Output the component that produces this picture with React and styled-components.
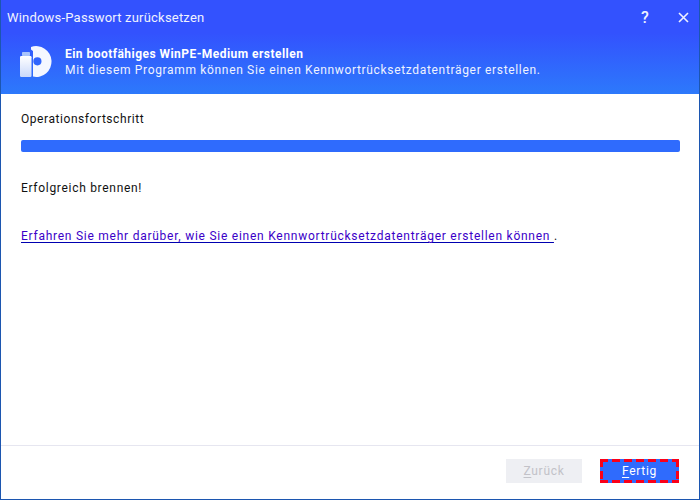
import React from "react";
import styled, { createGlobalStyle } from "styled-components";

const Global = createGlobalStyle`
  html, body { margin: 0; padding: 0; background: #fff; }
  #root { width: 700px; height: 500px; }
`;

const Frame = styled.div`
  width: 700px;
  height: 500px;
  box-sizing: border-box;
  display: flex;
  flex-direction: column;
  background: #fff;
  border: 1px solid #1c56b0;
  border-top: 0;
  font-family: Roboto, "Noto Sans", sans-serif;
  font-size: 12px;
  color: #111;
  overflow: hidden;
`;

const Header = styled.header`
  height: 94px;
  flex: none;
  background: linear-gradient(180deg, #3352fe 0%, #3352fe 35%, #2d79fb 100%);
  color: #fff;
  display: flex;
  flex-direction: column;
`;

const TitleBar = styled.div`
  height: 35px;
  display: flex;
  align-items: center;
  padding: 0 9px 2px 6px;
`;

const Title = styled.div`
  flex: 1;
  font-size: 13px;
  letter-spacing: 0.2px;
  color: #f0f2ff;
`;

const WinButton = styled.button`
  all: unset;
  width: 14px;
  height: 16px;
  display: flex;
  align-items: center;
  justify-content: center;
  margin-left: ${(p) => p.$gap || 0}px;
`;

const HelpMark = styled.span`
  font-size: 16px;
  font-weight: 500;
  color: #eef1ff;
  line-height: 1;
`;

const Banner = styled.div`
  display: flex;
  align-items: center;
  gap: 13px;
  padding: 9px 0 0 19px;
`;

const BannerText = styled.div`
  display: flex;
  flex-direction: column;
  gap: 1px;
  line-height: 15px;
`;

const BannerTitle = styled.div`
  font-weight: 700;
  font-size: 12px;
  letter-spacing: 0.46px;
`;

const BannerSub = styled.div`
  font-size: 12px;
  letter-spacing: 0.67px;
  color: #eef2ff;
`;

const Content = styled.main`
  flex: 1;
  display: flex;
  flex-direction: column;
  padding: 18px 19px 0 20px;
`;

const Label = styled.div`
  line-height: 15px;
  letter-spacing: 0.56px;
`;

const Track = styled.div`
  height: 12px;
  margin-top: 13px;
  border-radius: 2px;
  background: #2f6bfd;
  overflow: hidden;
`;

const Status = styled(Label)`
  margin-top: 29px;
  letter-spacing: 0.7px;
`;

const Info = styled.div`
  margin-top: 33px;
  line-height: 15px;
  letter-spacing: 0.75px;
`;

const Link = styled.a`
  color: #3b00c8;
  text-decoration: underline;
  text-decoration-color: #0000b0;
  text-underline-offset: 2px;
`;

const Footer = styled.footer`
  height: 54px;
  flex: none;
  box-sizing: border-box;
  border-top: 1px solid #e6e6f0;
  display: flex;
  justify-content: flex-end;
  align-items: flex-start;
  gap: 18px;
  padding: 13px 20px 0 0;
`;

const dash = "#fa0018";

const Button = styled.button`
  all: unset;
  width: ${(p) => (p.$primary ? 79 : 76)}px;
  height: 24px;
  box-sizing: border-box;
  display: flex;
  align-items: center;
  justify-content: center;
  font-size: 12px;
  letter-spacing: 0.7px;
  background-color: ${(p) => (p.$primary ? "#2f6bfd" : "#eeeff3")};
  color: ${(p) => (p.$primary ? "#fff" : "#c2c2c8")};
  background-repeat: no-repeat;
  background-image: ${(p) =>
    p.$primary
      ? `repeating-linear-gradient(90deg, ${dash} 0 8px, transparent 8px 12px),
         repeating-linear-gradient(90deg, ${dash} 0 8px, transparent 8px 12px),
         repeating-linear-gradient(180deg, ${dash} 0 8px, transparent 8px 12px),
         repeating-linear-gradient(180deg, ${dash} 0 8px, transparent 8px 12px)`
      : "none"};
  background-size: 100% 3px, 100% 3px, 3px 100%, 3px 100%;
  background-position: 0 0, 0 100%, 0 0, 100% 0;
  u { text-underline-offset: 2px; }
`;

const DiscIcon = () => (
  <svg width="32" height="32" viewBox="0 0 32 32">
    <defs>
      <linearGradient id="g" x1="0" y1="0" x2="0" y2="1">
        <stop offset="0" stopColor="#ffffff" />
        <stop offset="1" stopColor="#c9d8fb" />
      </linearGradient>
    </defs>
    <path
      fillRule="evenodd"
      fill="#f4f7ff"
      d="M11 1A15.4 15.4 0 1 1 13 30.6V5L11 3.5Z M17.4 11.2A4.1 4.1 0 1 0 17.4 19.4A4.1 4.1 0 1 0 17.4 11.2Z"
    />
    <rect x="2" y="6" width="8" height="4" rx="0.8" fill="#a9c4fb" />
    <rect x="0" y="10" width="11.5" height="21" rx="1.2" fill="url(#g)" />
  </svg>
);

const Close = () => (
  <svg width="11" height="11" viewBox="0 0 11 11">
    <path d="M1 1L10 10M10 1L1 10" stroke="#eef1ff" strokeWidth="1.6" fill="none" />
  </svg>
);

export default function App() {
  return (
    <>
      <Global />
      <Frame>
        <Header>
          <TitleBar>
            <Title>Windows-Passwort zurücksetzen</Title>
            <WinButton><HelpMark>?</HelpMark></WinButton>
            <WinButton $gap={24}><Close /></WinButton>
          </TitleBar>
          <Banner>
            <DiscIcon />
            <BannerText>
              <BannerTitle>Ein bootfähiges WinPE-Medium erstellen</BannerTitle>
              <BannerSub>Mit diesem Programm können Sie einen Kennwortrücksetzdatenträger erstellen.</BannerSub>
            </BannerText>
          </Banner>
        </Header>
        <Content>
          <Label>Operationsfortschritt</Label>
          <Track />
          <Status>Erfolgreich brennen!</Status>
          <Info>
            <Link href="#">Erfahren Sie mehr darüber, wie Sie einen Kennwortrücksetzdatenträger erstellen können </Link> .
          </Info>
        </Content>
        <Footer>
          <Button><span><u>Z</u>urück</span></Button>
          <Button $primary><span><u>F</u>ertig</span></Button>
        </Footer>
      </Frame>
    </>
  );
}
